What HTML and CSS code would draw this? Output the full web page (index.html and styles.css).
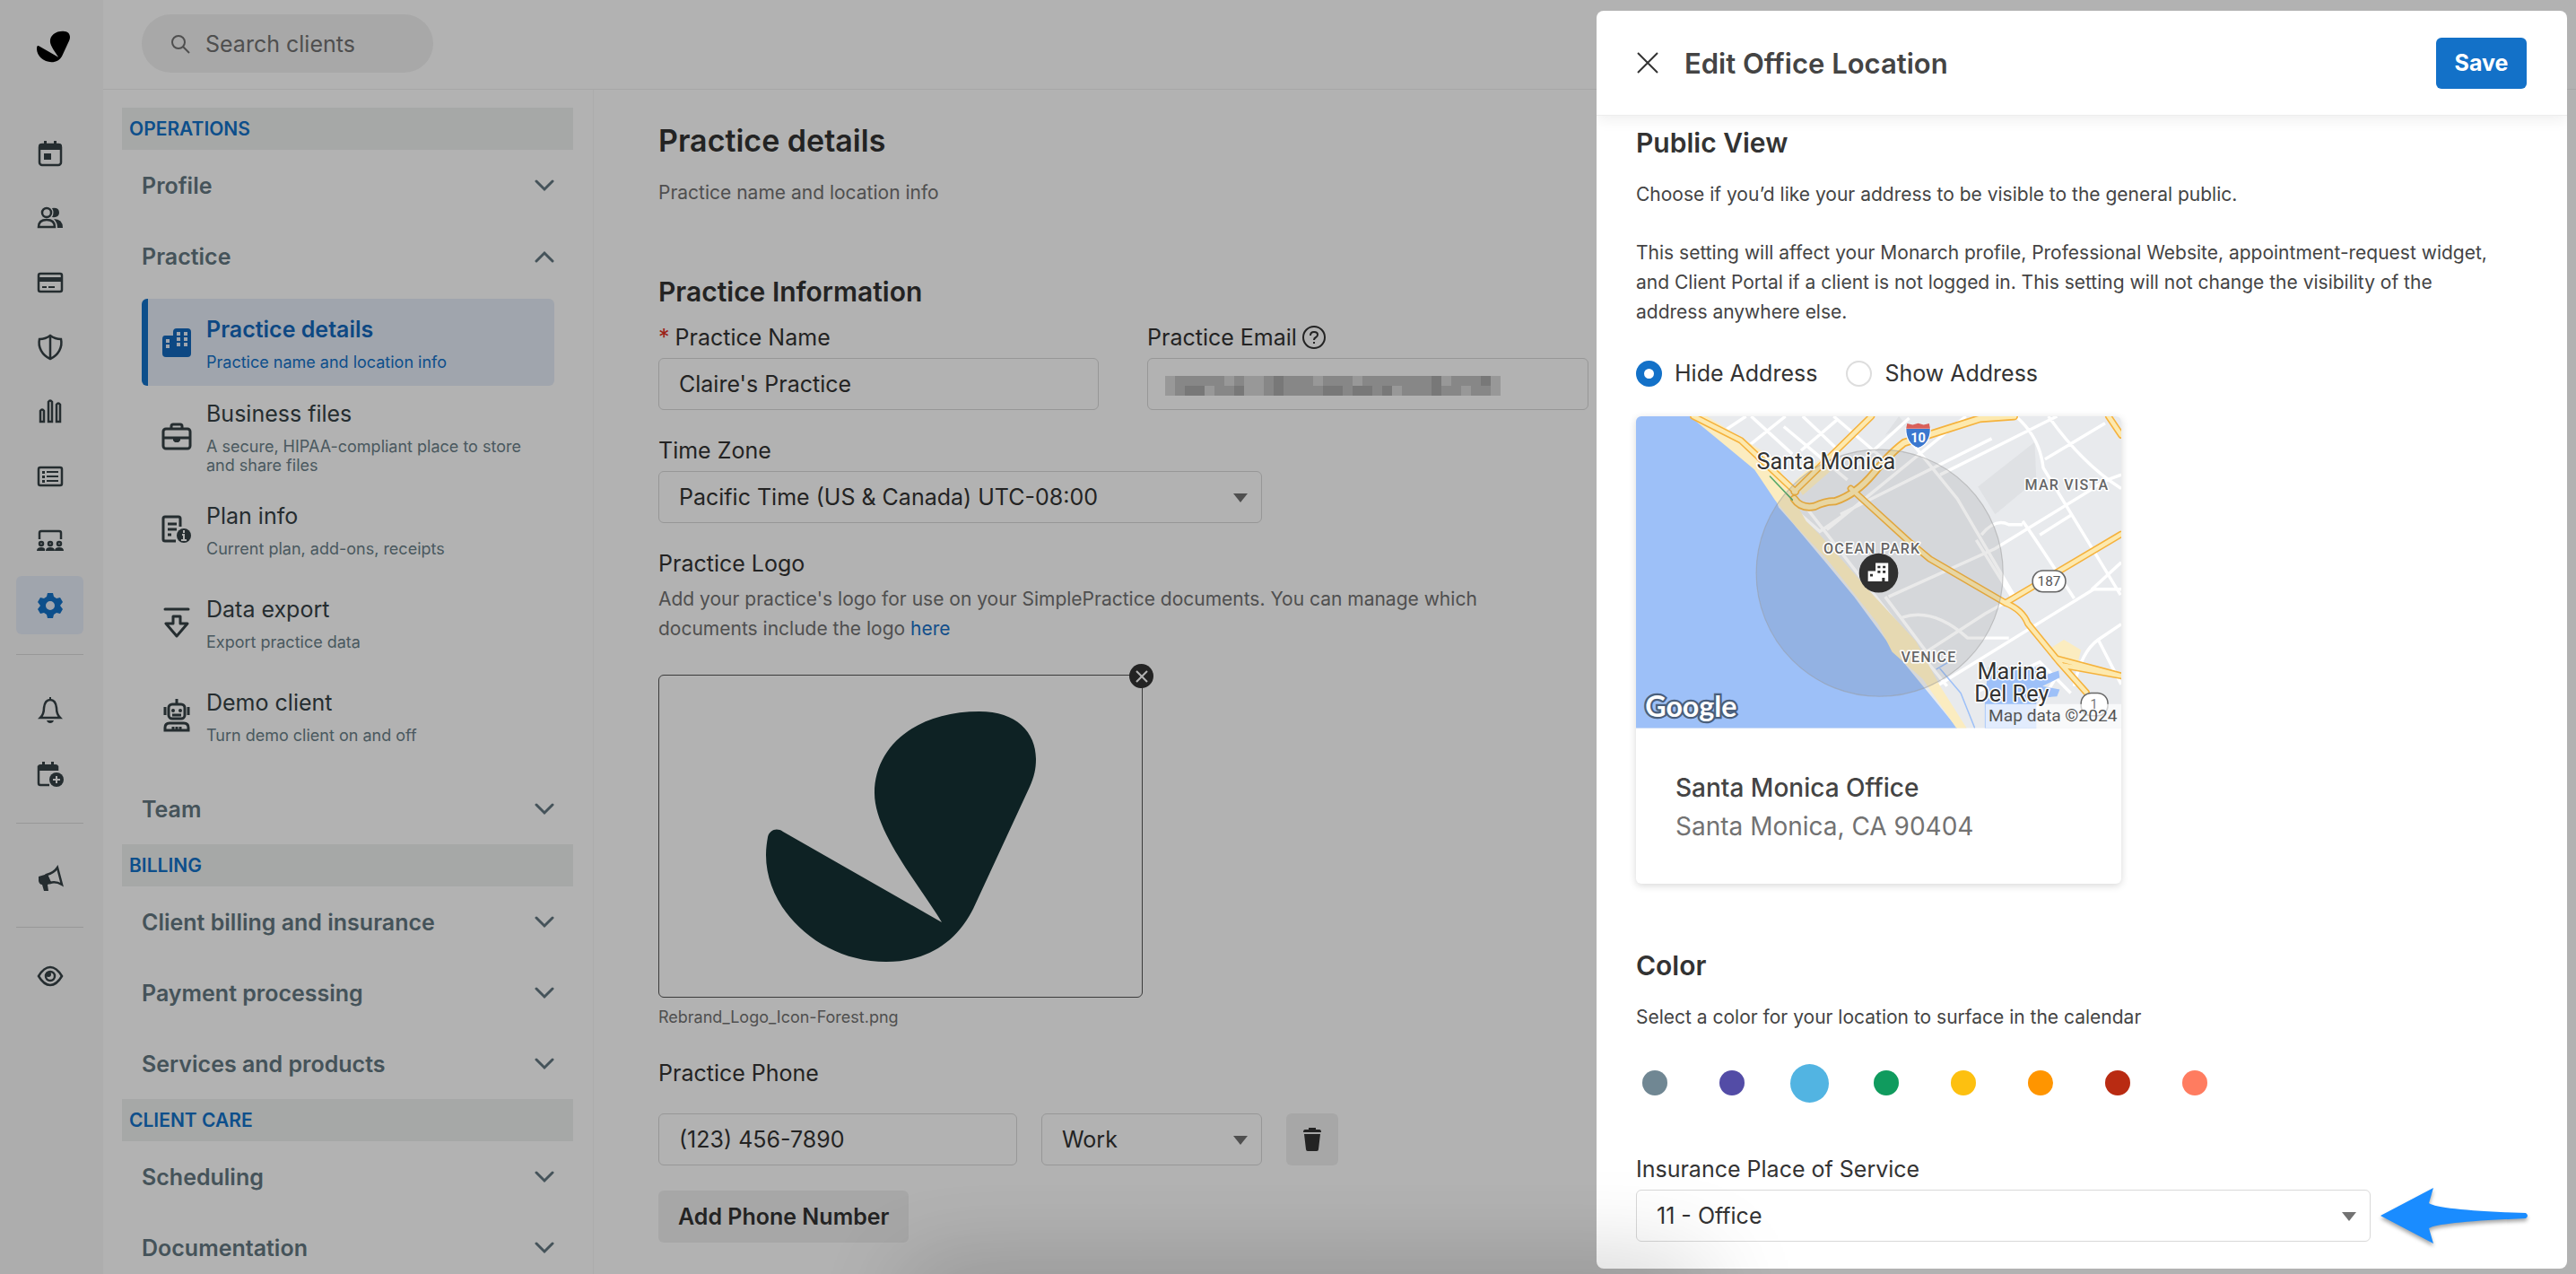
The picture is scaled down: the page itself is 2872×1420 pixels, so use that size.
FILE: index.html
```html
<!DOCTYPE html>
<html lang="en">
<head>
<meta charset="utf-8">
<title>Practice details</title>
<link rel="stylesheet" href="styles.css">
</head>
<body>
<svg class="defs" aria-hidden="true">
  <symbol id="mark" viewBox="119 40 301 279"><path d="M357 40C398 40 420 63 420 93C420 104 418 113 413 124L350 260C330 300 295 319 253 319C180 319 119 262 119 200C119 192 120 186 121 180C123 172 131 169 138 174L315 275C290 233 240 175 240 131C240 80 285 40 357 40Z"/></symbol>
  <symbol id="down" viewBox="0 0 22 14"><path d="M2 2l9 9 9-9" fill="none" stroke="currentColor" stroke-width="3" stroke-linecap="round"/></symbol>
  <symbol id="up" viewBox="0 0 22 14"><path d="M2 12l9-9 9 9" fill="none" stroke="currentColor" stroke-width="3" stroke-linecap="round"/></symbol>
</svg>
<div class="app">
  <nav class="rail" aria-label="Main">
    <a class="brand" href="#"><svg width="37" height="36"><use href="#mark"/></svg></a>
    <div class="rail-group">
      <a href="#" aria-label="Calendar"><svg width="30" height="30" viewBox="0 0 30 30"><rect x="3" y="5" width="24" height="23" rx="3" class="s"/><path d="M2 11V7q0-3 3-3h20q3 0 3 3v4zM8 1h3v5H8zM19 1h3v5h-3zM8 15h8v7H8z"/></svg></a>
      <a href="#" aria-label="Clients"><svg width="30" height="30" viewBox="0 0 30 30"><circle cx="11" cy="9" r="5" class="s"/><path class="s" d="M2 25q0-8 9-8t9 8z"/><path d="M17 4q8-1 8 5t-8 5q3-5 0-10zM19 16q10 0 10 10h-6q0-6-4-10z"/></svg></a>
      <a href="#" aria-label="Billing"><svg width="30" height="30" viewBox="0 0 30 30"><rect x="2" y="5" width="26" height="20" rx="2" class="s"/><path d="M2 9h26v5H2zM6 19h5v2H6zM13 19h7v2h-7z"/></svg></a>
      <a href="#" aria-label="Insurance"><svg width="30" height="30" viewBox="0 0 30 30"><path class="s" d="M15 2c4 3 8 4 12 4 2 9-3 18-12 22C6 24 1 15 3 6c4 0 8-1 12-4zM15 2v26"/></svg></a>
      <a href="#" aria-label="Analytics"><svg width="30" height="30" viewBox="0 0 30 30"><path class="s" d="M4 14q2-3 4 0v12H4zM13 4q2-3 4 0v22h-4zM22 7q2-3 4 0v19h-4z"/></svg></a>
      <a href="#" aria-label="Activity"><svg width="30" height="30" viewBox="0 0 30 30"><rect x="2" y="5" width="26" height="20" rx="2" class="s"/><path d="M6 9h3v3H6zM11 9h13v2H11zM6 14h3v3H6zM11 14h13v2H11zM6 19h3v3H6zM11 19h13v2H11z"/></svg></a>
      <a href="#" aria-label="Supervision"><svg width="30" height="30" viewBox="0 0 30 30"><path class="s" d="M3 13V6q0-2 2-2h20q2 0 2 2v7"/><circle cx="5" cy="18" r="2" class="s"/><circle cx="15" cy="18" r="2" class="s"/><circle cx="25" cy="18" r="2" class="s"/><path d="M0 26q0-4 5-4t4 4zM10 26q0-4 5-4t5 4zM20 26q0-4 5-4t5 4z"/></svg></a>
      <a href="#" aria-label="Settings" class="on"><svg width="30" height="30" viewBox="0 0 30 30"><path fill-rule="evenodd" d="M12 1h6l1 4 3 2 4-1 3 5-3 4 3 4-3 5-4-1-3 2-1 4h-6l-1-4-3-2-4 1-3-5 3-4-3-4 3-5 4 1 3-2zM15 10a5 5 0 1 0 0 10a5 5 0 1 0 0-10z"/></svg></a>
    </div>
    <div class="rail-group">
      <a href="#" aria-label="Notifications"><svg width="30" height="30" viewBox="0 0 30 30"><path class="s" d="M4 24q4-4 4-11 1-9 7-9t7 9q0 7 4 11z"/><path d="M14 1h2v4h-2zM11 27h8q-1 3-4 3t-4-3z"/></svg></a>
      <a href="#" aria-label="New appointment"><svg width="30" height="30" viewBox="0 0 30 30"><path class="s" d="M23 11V7H2v18q0 2 2 2h10"/><path d="M1 11V7q0-3 3-3h17q3 0 3 3v4zM6 1h3v5H6zM16 1h3v5h-3z"/><circle cx="22" cy="21" r="8"/><path d="M22 17v8M18 21h8" stroke="#f8f8f8" stroke-width="2"/></svg></a>
    </div>
    <div class="rail-group">
      <a href="#" aria-label="What's new"><svg width="30" height="30" viewBox="0 0 30 30"><path class="s" d="M11 11q8-2 12-8l5 19q-7-4-13-2z"/><path d="M2 13l10-3 3 11-3 1 1 7H8l-2-7q-3 0-4-4z"/></svg></a>
    </div>
    <div class="rail-group tight">
      <a href="#" aria-label="Preview"><svg width="30" height="30" viewBox="0 0 30 30"><path class="s" d="M2 15Q8 5 15 5t13 10q-6 10-13 10T2 15z"/><circle cx="15" cy="15" r="5" class="s"/><circle cx="13" cy="13" r="3"/></svg></a>
    </div>
  </nav>
  <div class="page">
    <header class="top">
      <label class="search"><svg width="22" height="22" viewBox="0 0 22 22" fill="none" stroke="#727272" stroke-width="2"><circle cx="9" cy="9" r="7"/><path d="M14 14l7 7"/></svg><input type="search" placeholder="Search clients" aria-label="Search clients"></label>
    </header>
    <div class="cols">
      <aside class="menu">
        <h2>Operations</h2>
        <button class="group">Profile<svg width="22" height="14"><use href="#down"/></svg></button>
        <button class="group" aria-expanded="true">Practice<svg width="22" height="14"><use href="#up"/></svg></button>
        <div class="items">
          <a class="item on" href="#"><svg width="34" height="34" viewBox="0 0 34 34"><path d="M4 9h9V5q0-4 4-4h12q4 0 4 4v24q0 4-4 4H5q-4 0-4-4V13q0-4 3-4z"/><path fill="#e6edf8" d="M17 5h4v4h-4zM25 5h4v4h-4zM17 11h4v4h-4zM25 11h4v4h-4zM17 17h4v4h-4zM25 17h4v4h-4zM5 13h4v4H5zM5 19h4v4H5z"/></svg><span><b>Practice details</b><small>Practice name and location info</small></span></a>
          <a class="item" href="#"><svg width="34" height="34" viewBox="0 0 34 34"><rect x="2" y="9" width="30" height="22" rx="3" class="s"/><path class="s" d="M11 9V6q0-2 2-2h8q2 0 2 2v3M2 19h30"/><path d="M13 19h8v3l-2 2h-4l-2-2z"/></svg><span><b>Business files</b><small>A secure, HIPAA-compliant place to store and share files</small></span></a>
          <a class="item" href="#"><svg width="34" height="34" viewBox="0 0 34 34"><path class="s" d="M16 30H4q-2 0-2-2V5q0-2 2-2h15q2 0 2 2v9M7 11h10M7 17h10M7 23h4"/><circle cx="25" cy="24" r="8"/><path d="M25 18v3M23 23h2v6M22 29h6" stroke="#fff" stroke-width="2" fill="none"/></svg><span><b>Plan info</b><small>Current plan, add-ons, receipts</small></span></a>
          <a class="item" href="#"><svg width="34" height="34" viewBox="0 0 34 34"><path class="s" stroke-linecap="round" stroke-linejoin="round" d="M4 2h26M13 10h8v8h8L17 32 5 18h8z"/></svg><span><b>Data export</b><small>Export practice data</small></span></a>
          <a class="item" href="#"><svg width="34" height="38" viewBox="0 0 34 38"><rect x="8" y="6" width="18" height="16" rx="4" class="s"/><path class="s" d="M17 0v6M4 9v9M30 9v9M4 35v-3q0-5 5-5h16q5 0 5 5v3zM13 34v-3M17 34v-3M21 34v-3M12 18h10"/><circle cx="13" cy="13" r="2"/><circle cx="21" cy="13" r="2"/></svg><span><b>Demo client</b><small>Turn demo client on and off</small></span></a>
        </div>
        <button class="group">Team<svg width="22" height="14"><use href="#down"/></svg></button>
        <h2>Billing</h2>
        <button class="group">Client billing and insurance<svg width="22" height="14"><use href="#down"/></svg></button>
        <button class="group">Payment processing<svg width="22" height="14"><use href="#down"/></svg></button>
        <button class="group">Services and products<svg width="22" height="14"><use href="#down"/></svg></button>
        <h2>Client care</h2>
        <button class="group">Scheduling<svg width="22" height="14"><use href="#down"/></svg></button>
        <button class="group">Documentation<svg width="22" height="14"><use href="#down"/></svg></button>
      </aside>
      <main class="details">
        <h1>Practice details</h1>
        <p class="lead">Practice name and location info</p>
        <h2>Practice Information</h2>
        <div class="pair">
          <div><label class="label" for="pname"><i>*</i> Practice Name</label><input class="box" id="pname" value="Claire's Practice"></div>
          <div><label class="label" for="pmail">Practice Email <svg width="26" height="26" viewBox="0 0 26 26" fill="none" stroke="#333" stroke-width="2"><circle cx="13" cy="13" r="12"/><path d="M9 11q0-4 4-4t4 3q0 2-2 3t-2 3M13 18v2"/></svg></label>
            <div class="stack"><input class="box" id="pmail"><svg class="redacted" width="374" height="33" viewBox="0 0 34 3" preserveAspectRatio="none" shape-rendering="crispEdges"><path fill="#fff" opacity=".4" d="M0 0h34v1H0z"/><path fill="#c2c2c2" d="M0 1h34v2H0z"/><path fill="#dadada" d="M0 1h1v2H0zM6 1h1v1H6zM8 1h2v1H8zM19 1h1v1h-1zM15 1h1v1h-1zM28 1h1v1h-1zM33 1h1v2h-1zM4 2h1v1H4zM8 2h2v1H8zM23 2h1v1h-1zM30 2h1v1h-1z"/><path fill="#adadad" d="M2 2h2v1H2zM7 2h1v1H7zM11 1h1v2h-1zM16 2h2v1h-2zM19 2h2v1h-2zM22 2h1v1h-1zM27 1h1v2h-1zM32 1h1v1h-1z"/></svg></div></div>
        </div>
        <label class="label" for="tz">Time Zone</label>
        <div class="select w-tz"><select class="box" id="tz"><option>Pacific Time (US &amp; Canada) UTC-08:00</option></select></div>
        <h3 class="label">Practice Logo</h3>
        <p class="help">Add your practice's logo for use on your SimplePractice documents. You can manage which documents include the logo <a href="#">here</a></p>
        <figure>
          <div class="logo-box"><svg width="301" height="279"><use href="#mark"/></svg><button class="remove" aria-label="Remove logo"><svg width="14" height="14" viewBox="0 0 14 14" stroke="#fff" stroke-width="2"><path d="M1 1l12 12M13 1L1 13"/></svg></button></div>
          <figcaption>Rebrand_Logo_Icon-Forest.png</figcaption>
        </figure>
        <label class="label" for="phone">Practice Phone</label>
        <div class="phone">
          <input class="box" id="phone" value="(123) 456-7890">
          <div class="select w-kind"><select class="box" aria-label="Phone type"><option>Work</option></select></div>
          <button class="trash" aria-label="Delete phone"><svg width="20" height="26" viewBox="0 0 20 26" fill="#333"><path d="M6 0h8v2h4q2 0 2 3H0q0-3 2-3h4zM1 7h18l-2 17q0 2-2 2H5q-2 0-2-2z"/></svg></button>
        </div>
        <button class="add">Add Phone Number</button>
      </main>
    </div>
  </div>
</div>
<div class="backdrop"></div>
<section class="panel" role="dialog" aria-labelledby="ptitle">
  <header>
    <button class="close" aria-label="Close"><svg width="24" height="24" viewBox="0 0 24 24" stroke="#333" stroke-width="2"><path d="M1 1l22 22M23 1L1 23"/></svg></button>
    <h1 id="ptitle">Edit Office Location</h1>
    <button class="save">Save</button>
  </header>
  <div class="body">
    <h2>Public View</h2>
    <p>Choose if you’d like your address to be visible to the general public.</p>
    <p class="note">This setting will affect your Monarch profile, Professional Website, appointment-request widget, and Client Portal if a client is not logged in. This setting will not change the visibility of the address anywhere else.</p>
    <div class="radios">
      <label><input type="radio" name="vis" checked>Hide Address</label>
      <label><input type="radio" name="vis">Show Address</label>
    </div>
    <article class="card">
      <svg class="map" viewBox="65 65 1412 907" role="img" aria-label="Map of Santa Monica">
        <path fill="#e8eaed" d="M65 65h1412v907H65z"/>
        <path fill="#dfe1e4" d="M1225 140L1060 270l50 80 120-100zM830 65l-40 55 60-30z"/>
        <g fill="none" stroke="#fff" stroke-width="9">
          <path d="M385 65L310 115M500 65L375 165M495 95L680 250M640 65L780 185M550 65L650 160M400 65L520 175M650 75L545 165M860 70L700 215M1025 65L620 395M1100 130L660 350M870 145l130 160 170 290M950 235L1180 120 1290 65M1170 65q70 60 80 150l225 370M1255 190L1430 85M1477 235q-60 20-90 45L1110 450 800 590M1190 380h-40q-40-20-80 30M1240 410l95-60M1190 370q30 40 150 225M1477 490L1390 570M1477 568h-80L940 850M1055 425L1165 600M560 330l320 410 90 110M790 590L910 750 1080 640 1330 500M840 650q90-30 190 60h120M1410 715l67 130M1340 850q20-100 70-135l67-45M1050 870L1240 780 1330 870M1265 65q100 140 212 210M520 330L600 400 680 345M1200 970l90-150"/>
        </g>
        <path fill="#9dc0f8" d="M65 65H222L400 205 470 300 480 330 520 375 600 470 700 590 810 740 1000 972H65z"/>
        <path fill="#fbecc0" d="M222 65h50L470 190 520 300 560 370 600 410 680 500 760 590 880 720 950 850 1027 972h-30L900 830 810 750 770 670 620 480 530 385 470 310 410 220z"/>
        <path fill="#fbecc0" d="M600 190l30 35-80 70-25-40zM1270 740l40-25 50 30-10 40-60-10z"/>
        <path fill="#9dc0f8" d="M1090 795h140l20 25 45-15 3 20-50 25 50 10-8 20-60 5v87h-150v-80z"/>
        <g fill="none" stroke-linecap="round" stroke-linejoin="round">
          <g stroke="#f5b23c" stroke-width="20"><path d="M232 65L370 135 530 285M525 285L750 65M690 275L860 430 920 480 1140 608M1140 608L1477 408M1140 608q50 20 65 60l90 110 80 90M1290 770l187 50M1310 790l167 30M1440 65l37 55"/><path stroke-width="24" d="M525 305q20 30 60 22 30-15 60-15 60-20 110-80 50-60 90-90L1065 72 1165 65"/></g>
          <g stroke="#fde9ae" stroke-width="12"><path d="M232 65L370 135 530 285M525 285L750 65M690 275L860 430 920 480 1140 608M1140 608L1477 408M1140 608q50 20 65 60l90 110 80 90M1290 770l187 50M1310 790l167 30M1440 65l37 55"/><path stroke-width="15" d="M525 305q20 30 60 22 30-15 60-15 60-20 110-80 50-60 90-90L1065 72 1165 65"/></g>
          <path stroke="#55a868" stroke-width="4" d="M455 240l65 68"/>
          <path stroke="#9dc0f8" stroke-width="4" d="M950 800l60 70 40 100M940 800l35-20"/>
        </g>
        <circle cx="774" cy="521" r="359" fill="#555" fill-opacity=".12" stroke="#999" stroke-opacity=".5" stroke-width="3"/>
        <path fill="#3b78cf" stroke="#fff" stroke-width="3" d="M850 100h72q0 45-36 58-36-13-36-58z"/><path fill="#d9605a" d="M854 86l16 4 16-5 16 5 16-4 3 15h-70z"/>
        <rect x="1219" y="514" width="96" height="62" rx="30" fill="#fff" stroke="#666" stroke-width="4"/>
        <rect x="1360" y="870" width="78" height="66" rx="30" fill="#fff" stroke="#666" stroke-width="4"/>
        <path fill="#fff" opacity=".7" d="M1082 902h395v70h-395z"/>
        <g class="map-text" text-anchor="middle">
          <text x="886" y="141" font-size="38" fill="#fff" font-weight="700">10</text>
          <text x="1267" y="559" font-size="40" fill="#555">187</text>
          <text x="1398" y="915" font-size="38" fill="#777">1</text>
          <g class="halo"><text x="618" y="219" font-size="66">Santa Monica</text><text x="1160" y="830" font-size="66">Marina</text><text x="1158" y="895" font-size="66">Del Rey</text>
          <g class="area" font-size="42"><text x="1319" y="278">MAR VISTA</text><text x="752" y="465">OCEAN PARK</text><text x="917" y="780">VENICE</text></g></g>
          <text x="1278" y="952" font-size="50" fill="#555">Map data ©2024</text>
          <text class="google" x="225" y="940" font-size="84">Google</text>
        </g>
        <circle cx="771" cy="521" r="57" fill="#303030"/>
        <path fill="#fff" d="M740 515h22v-23h37v53h-10v-10h-8v10h-41z"/><path fill="#303030" d="M768 500h8v7h-8zM783 500h8v7h-8zM768 514h8v7h-8zM783 514h8v7h-8zM746 524h8v7h-8z"/>
      </svg>
      <div class="place"><strong>Santa Monica Office</strong><span>Santa Monica, CA 90404</span></div>
    </article>
    <h2 class="color-title">Color</h2>
    <p>Select a color for your location to surface in the calendar</p>
    <div class="colors" role="radiogroup" aria-label="Color">
      <input type="radio" name="color" class="c1" aria-label="Gray"><input type="radio" name="color" class="c2" aria-label="Purple"><input type="radio" name="color" class="c3" aria-label="Blue" checked><input type="radio" name="color" class="c4" aria-label="Green"><input type="radio" name="color" class="c5" aria-label="Yellow"><input type="radio" name="color" class="c6" aria-label="Orange"><input type="radio" name="color" class="c7" aria-label="Red"><input type="radio" name="color" class="c8" aria-label="Coral">
    </div>
    <label class="label" for="pos">Insurance Place of Service</label>
    <div class="pos"><div class="select"><select class="box" id="pos"><option>11 - Office</option></select></div>
      <svg class="arrow" width="164" height="62" viewBox="0 0 164 62"><path fill="#1a8cff" d="M0 31L59 0l-5 17q12 8 108 11 4 3 0 6-96 4-108 11l5 17z"/></svg></div>
  </div>
</section>
<div class="dock-shadow"></div>
</body>
</html>
```
FILE: styles.css
```css
* { box-sizing: border-box; }
body { margin: 0; font-family: Inter, "Liberation Sans", sans-serif; font-size: 25px; color: #333; background: #fff; overflow: hidden; }
h1, h2, h3, p, figure { margin: 0; }
button, input, select { font: inherit; color: inherit; }
button { border: 0; background: none; padding: 0; }
a { color: #1b71c8; text-decoration: none; }
svg { display: block; flex: none; }
.defs { position: absolute; width: 0; height: 0; }
.s { fill: none; stroke: currentColor; stroke-width: 2; }

.app { display: flex; height: 100vh; overflow: hidden; }
.rail { flex: none; width: 115px; background: #f8f8f8; display: flex; flex-direction: column; padding: 34px 22px 0 18px; }
.brand { display: block; color: #000; padding-left: 23px; height: 104px; }
.rail-group { display: flex; flex-direction: column; gap: 7px; }
.rail-group + .rail-group { border-top: 1px solid #dadada; margin-top: 22px; padding-top: 28px; }
.rail-group + .tight { padding-top: 21px; }
.rail-group a { height: 65px; display: flex; align-items: center; justify-content: center; color: #354145; fill: currentColor; border-radius: 6px; }
.rail-group .s { stroke-width: 2.5; }
.rail-group a.on { background: #e6edf8; color: #1371c8; }

.page { flex: 1; min-width: 0; }
.top { height: 100px; border-bottom: 1px solid #f0f0f0; padding: 16px 43px; }
.search { display: flex; align-items: center; gap: 17px; width: 325px; height: 65px; padding: 0 32px; border-radius: 33px; background: #f1f1f1; }
.search input { border: 0; background: none; width: 220px; padding: 0; outline: 0; font-size: 25px; }
.search input::placeholder { color: #727272; }
.search input::-webkit-search-cancel-button { display: none; }
.cols { display: flex; }
.menu { flex: none; width: 547px; border-right: 1px solid #f6f6f6; padding: 20px 22px 0 21px; }
.menu h2 { font-size: 21px; line-height: 47px; font-weight: 600; text-transform: uppercase; color: #1371c8; background: #eef1f0; padding-left: 8px; }
.group { display: flex; width: 100%; height: 79px; align-items: center; justify-content: space-between; padding: 0 21px 0 22px; font-size: 25px; font-weight: 600; color: #647881; }
.items { display: flex; flex-direction: column; gap: 7px; padding: 8px 21px 16px 22px; }
.item { display: flex; align-items: center; gap: 16px; height: 97px; padding: 0 20px 0 22px; color: #354145; fill: currentColor; border-radius: 6px; }
.item .s { stroke-width: 3; }
.item.on { background: #e6edf8; color: #1368bc; border-left: 7px solid #1371c8; padding-left: 15px; }
.item span { flex: 1; padding-top: 4px; }
.item b { display: block; font-size: 25px; line-height: 29px; font-weight: 400; padding-bottom: 11px; box-sizing: content-box; }
.item.on b { font-weight: 600; }
.item small { display: block; font-size: 18px; line-height: 21px; color: #6a7f89; }
.item.on small { color: #1371c8; }

.details { flex: none; width: 1110px; padding: 35px 0 0 72px; }
.details h1 { font-size: 34px; line-height: 44px; font-weight: 600; }
.lead { margin-top: 19px; font-size: 21px; line-height: 33px; color: #727272; }
.details h2 { margin: 74px 0 15px; font-size: 30px; line-height: 40px; font-weight: 600; }
.label { display: flex; align-items: center; gap: 6px; font-size: 25px; line-height: 32px; font-weight: 400; margin-bottom: 7px; }
.label i { color: #e02f1f; font-style: normal; }
.box { appearance: none; display: block; width: 100%; height: 58px; border: 1px solid #d9d9d9; border-radius: 6px; background: #fff; padding: 0 22px; outline: 0; }
.pair { display: grid; grid-template-columns: 491px 492px; gap: 54px; margin-bottom: 29px; }
.stack, .select { position: relative; }
.redacted { position: absolute; left: 20px; top: 9px; }
.select::after { content: ""; position: absolute; right: 16px; top: 25px; border: 8px solid transparent; border-top: 10px solid #727272; border-bottom: 0; pointer-events: none; }
.w-tz { width: 673px; margin-bottom: 29px; }
.help { width: 960px; font-size: 21px; line-height: 33px; color: #727272; margin-bottom: 35px; }
.logo-box { position: relative; width: 540px; height: 360px; border: 1px solid #555; border-radius: 6px; display: grid; place-items: center; fill: #153234; }
.remove { position: absolute; right: -13px; top: -13px; width: 27px; height: 27px; border-radius: 50%; background: #333; display: grid; place-items: center; }
figcaption { margin: 10px 0 34px; font-size: 18px; line-height: 24px; color: #727272; }
.phone { display: flex; gap: 27px; margin: 29px 0 28px; }
.phone > .box { width: 400px; }
.w-kind { width: 246px; }
.trash { width: 58px; height: 58px; border-radius: 6px; background: #f0f0f0; display: grid; place-items: center; }
.add { height: 58px; padding: 0 22px; border-radius: 6px; background: #f0f0f0; font-size: 25px; font-weight: 600; }

.backdrop { position: fixed; inset: 0; background: rgba(0, 0, 0, .3); }
.panel { position: fixed; top: 12px; right: 10px; bottom: 6px; width: 1082px; max-width: 100%; background: #fff; border-radius: 8px; overflow: hidden; }
.panel header { display: flex; align-items: center; height: 117px; padding: 0 45px; border-bottom: 1px solid #ededed; box-shadow: 0 4px 16px rgba(0, 0, 0, .07); }
.panel h1 { flex: 1; margin-left: 29px; font-size: 31px; font-weight: 600; color: #444; }
.save { width: 101px; height: 57px; border-radius: 6px; background: #1371c8; color: #fff; font-weight: 700; }
.body { padding: 10px 44px 0; }
.body h2 { font-size: 30px; line-height: 40px; font-weight: 600; }
.body p { margin-top: 21px; font-size: 21px; line-height: 33px; color: #444; }
.body .note { margin-top: 32px; padding-right: 32px; }
.radios { display: flex; gap: 32px; margin: 36px 0 32px; }
.radios label { display: flex; align-items: center; gap: 14px; line-height: 32px; }
.radios input { appearance: none; margin: 0; width: 29px; height: 29px; border: 2px solid #ddd; border-radius: 50%; }
.radios input:checked { border: 9px solid #1371c8; }
.card { width: 541px; border-radius: 6px; overflow: hidden; box-shadow: 0 2px 8px rgba(0, 0, 0, .16); }
.map { width: 100%; height: auto; }
.map-text { font-family: Roboto, sans-serif; }
.halo { fill: #333; stroke: #fff; stroke-width: 8px; paint-order: stroke; stroke-linejoin: round; }
.area { fill: #666; font-weight: 500; letter-spacing: 3px; }
.google { font-family: Lato, sans-serif; font-weight: 700; fill: #fff; stroke: #4a5f7c; stroke-width: 12px; paint-order: stroke; }
.place { display: flex; flex-direction: column; padding: 45px 44px 42px; font-size: 28px; line-height: 43px; color: #727272; }
.place strong { font-weight: 500; color: #444; }
.body .color-title { margin-top: 71px; }
.colors { display: flex; align-items: center; gap: 58px; height: 43px; padding-left: 7px; margin: 36px 0 58px; }
.colors input { appearance: none; margin: 0; width: 28px; height: 28px; border-radius: 50%; }
.colors input:checked { width: 43px; height: 43px; margin: 0 -8px 0 -7px; }
.c1 { background: #708793; } .c2 { background: #534ca6; } .c3 { background: #52b4e2; } .c4 { background: #109b5e; }
.c5 { background: #fdc010; } .c6 { background: #ff9500; } .c7 { background: #b92b12; } .c8 { background: #ff7c60; }
.body .label { margin-bottom: 5px; }
.pos { display: flex; align-items: center; gap: 11px; }
.pos .select { flex: 1; }
.arrow { filter: drop-shadow(0 3px 2px rgba(0, 0, 0, .35)); overflow: visible; }
.dock-shadow { position: fixed; left: 35%; right: 34%; top: 100%; height: 60px; box-shadow: 0 0 110px rgba(0, 0, 0, .28); pointer-events: none; }
```
